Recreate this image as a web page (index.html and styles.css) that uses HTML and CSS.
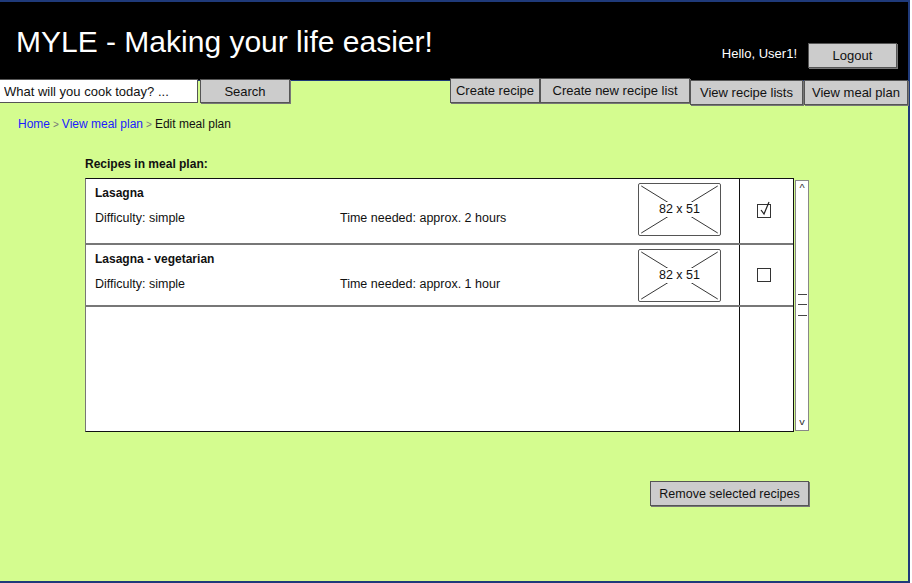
FILE: index.html
```html
<!DOCTYPE html>
<html lang="en">
<head>
<meta charset="utf-8">
<title>MYLE - Edit meal plan</title>
<link rel="stylesheet" href="styles.css">
</head>
<body>
<div class="page">
  <header class="header">
    <h1 class="title">MYLE - Making your life easier!</h1>
    <div class="user">
      <span class="hello">Hello, User1!</span>
      <button class="btn logout">Logout</button>
    </div>
  </header>
  <nav class="toolbar">
    <input class="search-input" type="text" value="What will you cook today? ...">
    <button class="btn search-btn">Search</button>
    <div class="tabs">
      <button class="btn tab tab-create">Create recipe</button>
      <button class="btn tab tab-newlist">Create new recipe list</button>
      <button class="btn tab tab-lists">View recipe lists</button>
      <button class="btn tab tab-plan">View meal plan</button>
    </div>
  </nav>
  <main class="content">
    <div class="crumbs">
      <a class="crumb-link">Home</a><span class="sep">&gt;</span><a class="crumb-link">View meal plan</a><span class="sep">&gt;</span><span class="crumb-cur">Edit meal plan</span>
    </div>
    <section class="plan">
      <h2 class="plan-title">Recipes in meal plan:</h2>
      <div class="listwrap">
        <div class="list">
          <div class="row row-first">
            <div class="info">
              <div class="name">Lasagna</div>
              <div class="meta"><span class="diff">Difficulty: simple</span><span class="time">Time needed: approx. 2 hours</span></div>
            </div>
            <div class="thumb">
              <svg class="thumb-x" width="82" height="52" viewBox="0 0 82 52"><line x1="2" y1="2" x2="80" y2="50"/><line x1="80" y1="2" x2="2" y2="50"/></svg>
              <span class="thumb-label">82 x 51</span>
            </div>
            <div class="check-cell">
              <span class="checkbox">
                <svg class="tick" width="14" height="16" viewBox="0 0 14 16"><path d="M3 9 L6 13 L11 1"/></svg>
              </span>
            </div>
          </div>
          <div class="row row-second">
            <div class="info">
              <div class="name">Lasagna - vegetarian</div>
              <div class="meta"><span class="diff">Difficulty: simple</span><span class="time">Time needed: approx. 1 hour</span></div>
            </div>
            <div class="thumb">
              <svg class="thumb-x" width="82" height="52" viewBox="0 0 82 52"><line x1="2" y1="2" x2="80" y2="50"/><line x1="80" y1="2" x2="2" y2="50"/></svg>
              <span class="thumb-label">82 x 51</span>
            </div>
            <div class="check-cell">
              <span class="checkbox"></span>
            </div>
          </div>
          <div class="row row-empty">
            <div class="info"></div>
            <div class="check-cell"></div>
          </div>
        </div>
        <div class="scrollbar">
          <span class="arrow">^</span>
          <div class="grip"><i></i><i></i><i></i></div>
          <span class="arrow arrow-down">v</span>
        </div>
      </div>
      <div class="actions">
        <button class="btn remove">Remove selected recipes</button>
      </div>
    </section>
  </main>
</div>
</body>
</html>
```

FILE: styles.css
```css
* { box-sizing: border-box; }
html, body { margin: 0; padding: 0; background: #ffffff; }
body { font-family: "Liberation Sans", Arial, sans-serif; }

.page {
  width: 910px;
  height: 583px;
  background: #d4fc8f;
  border-top: 2px solid #1f3a7a;
  border-right: 2px solid #1f3a7a;
  border-bottom: 2px solid #1f3a7a;
  display: flex;
  flex-direction: column;
}

.header {
  height: 79px;
  background: #000;
  border-bottom: 1px solid #1f3a7a;
  display: flex;
  justify-content: space-between;
  align-items: flex-start;
  flex-shrink: 0;
}
.title {
  margin: 22px 0 0 16px;
  font-size: 30px;
  font-weight: normal;
  color: #fff;
  line-height: 36px;
}
.user {
  display: flex;
  align-items: center;
  margin: 40px 11px 0 0;
}
.hello {
  color: #fff;
  font-size: 13px;
  margin-right: 11px;
  margin-top: -4px;
}

.btn {
  font-family: "Liberation Sans", Arial, sans-serif;
  font-size: 13px;
  color: #111;
  background: #cccccc;
  border: 1px solid #555;
  border-radius: 0;
  padding: 0;
  box-shadow: 1px 1px 0 #777;
}
.logout { width: 89px; height: 25px; margin-top: 1px; }

.toolbar {
  display: flex;
  align-items: flex-start;
  height: 25px;
  margin-top: -3px;
  flex-shrink: 0;
}
.search-input {
  width: 198px;
  height: 24px;
  margin: 1px 0 0 0;
  border: 1px solid #555;
  border-left: none;
  background: #fff;
  font-family: "Liberation Sans", Arial, sans-serif;
  font-size: 13px;
  color: #111;
  padding: 0 0 0 4px;
  outline: none;
}
.search-btn { width: 90px; height: 24px; margin: 1px 0 0 2px; }
.tabs { display: flex; margin-left: auto; align-items: flex-start; }
.tab { height: 25px; }
.tab-create { width: 90px; }
.tab-newlist { width: 150px; }
.tab-lists { width: 113px; margin-top: 2px; }
.tab-plan { width: 104px; margin: 2px 0 0 1px; }

.content { padding: 14px 0 0 18px; }
.crumbs { font-size: 12px; line-height: 14px; color: #222; }
.crumb-link { color: #1a1aff; }
.sep { color: #777; margin: 0 3px; font-size: 10px; }
.crumb-cur { color: #111; }

.plan { margin-left: 67px; width: 724px; }
.plan-title {
  margin: 25px 0 0 0;
  font-size: 12px;
  font-weight: bold;
  line-height: 14px;
  color: #111;
}
.listwrap { display: flex; margin-top: 7px; height: 255px; }
.list {
  width: 709px;
  height: 254px;
  background: #fff;
  border: 1px solid #111;
  border-left-color: #777;
  display: flex;
  flex-direction: column;
}
.row { display: flex; border-bottom: 2px solid #777; }
.row-first { height: 66px; }
.row-second { height: 62px; }
.row-empty { flex: 1; border-bottom: none; }
.info { flex: 1; padding: 7px 0 0 9px; font-size: 12.5px; color: #111; }
.name { font-weight: bold; line-height: 14px; font-size: 12px; }
.meta { display: flex; margin-top: 11px; line-height: 14px; }
.diff { width: 245px; }
.thumb {
  position: relative;
  width: 83px;
  height: 53px;
  margin: 4px 18px 0 0;
  border: 1.5px solid #555;
  border-radius: 2px;
  background: #fff;
  display: flex;
  align-items: center;
  justify-content: center;
}
.thumb-x { position: absolute; left: 0; top: 0; width: 100%; height: 100%; }
.thumb-x line { stroke: #333; stroke-width: 1; }
.thumb-label {
  position: relative;
  font-size: 12.5px;
  background: #fff;
  padding: 1px 2px;
  color: #111;
  line-height: 13px;
}
.check-cell {
  width: 54px;
  border-left: 1px solid #111;
  display: flex;
  justify-content: center;
  align-items: center;
}
.checkbox {
  position: relative;
  width: 14px;
  height: 14px;
  border: 1px solid #333;
  background: #fff;
  margin-right: 5px;
}
.tick { position: absolute; left: 0; top: -4px; }
.tick path { fill: none; stroke: #222; stroke-width: 1.2; }

.scrollbar {
  width: 14px;
  height: 251px;
  margin: 2px 0 0 1px;
  background: #fff;
  border: 1px solid #888;
  position: relative;
  display: flex;
  flex-direction: column;
  align-items: center;
}
.arrow { font-size: 11px; color: #333; line-height: 11px; margin-top: 2px; }
.arrow-down { margin-top: auto; margin-bottom: 2px; transform: scaleY(0.8); }
.grip {
  position: absolute;
  left: 2px;
  top: 113px;
  width: 9px;
}
.grip i { display: block; height: 1px; background: #444; }
.grip i:nth-child(2) { margin-top: 9px; }
.grip i:nth-child(3) { margin-top: 10px; }

.actions { display: flex; justify-content: flex-end; margin-top: 48px; }
.remove { width: 159px; height: 25px; font-size: 12.5px; }
```
